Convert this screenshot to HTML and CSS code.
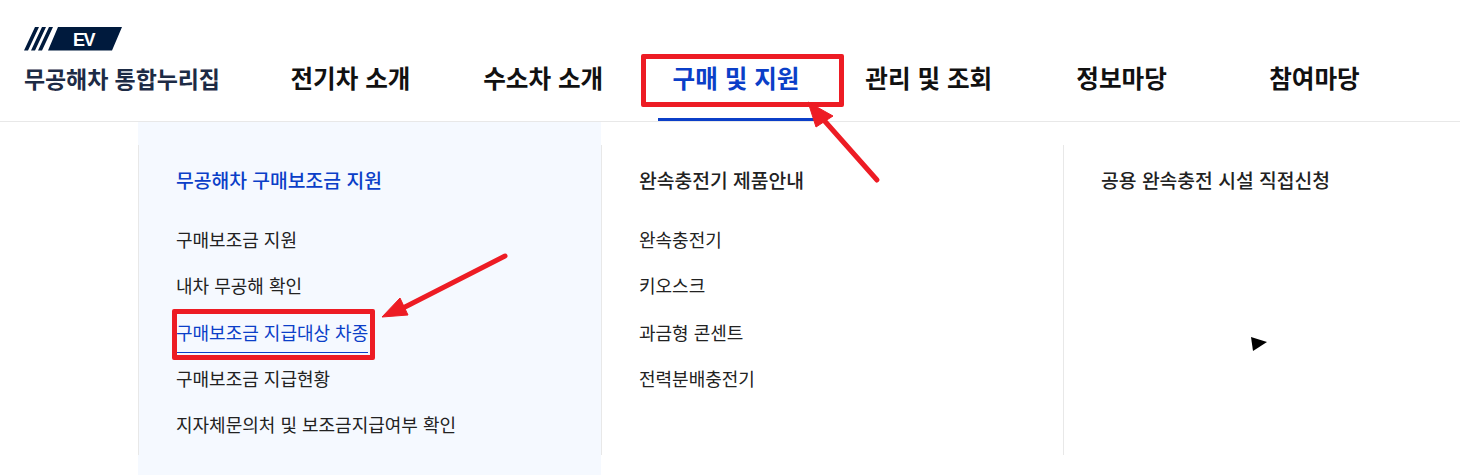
FILE: index.html
```html
<!DOCTYPE html>
<html lang="ko">
<head>
  <meta charset="UTF-8">
  <title>무공해차 통합누리집</title>
  <meta name="viewport" content="width=device-width, initial-scale=1">
  <link rel="stylesheet" href="styles.css">
</head>
<body>
  <header class="top">
    <a class="logo" href="#">
      <svg class="logo-mark" width="98" height="25" viewBox="0 0 98 25">
        <path d="M0 24.500 L11 1 L15 1 L4 24.500Z M7 24.500 L18 1 L22 1 L11 24.500Z M14 24.500 L25 1 L29 1 L18 24.500Z M24 24.500 L34 1 L98 1 L88 24.500Z" fill="#001a3d"/>
        <text x="49" y="20" class="logo-ev">EV</text>
      </svg>
      <span class="logo-name">무공해차 통합누리집</span>
    </a>
    <nav class="gnb">
      <a href="#">전기차 소개</a>
      <a href="#">수소차 소개</a>
      <a href="#" class="on">구매 및 지원</a>
      <a href="#">관리 및 조회</a>
      <a href="#">정보마당</a>
      <a href="#">참여마당</a>
    </nav>
  </header>

  <section class="submenu">
    <div class="col first">
      <h3 class="active">무공해차 구매보조금 지원</h3>
      <ul>
        <li><a href="#">구매보조금 지원</a></li>
        <li><a href="#">내차 무공해 확인</a></li>
        <li><a href="#" class="current">구매보조금 지급대상 차종</a></li>
        <li><a href="#">구매보조금 지급현황</a></li>
        <li><a href="#">지자체문의처 및 보조금지급여부 확인</a></li>
      </ul>
    </div>
    <div class="col">
      <h3>완속충전기 제품안내</h3>
      <ul>
        <li><a href="#">완속충전기</a></li>
        <li><a href="#">키오스크</a></li>
        <li><a href="#">과금형 콘센트</a></li>
        <li><a href="#">전력분배충전기</a></li>
      </ul>
    </div>
    <div class="col">
      <h3>공용 완속충전 시설 직접신청</h3>
    </div>
  </section>

  <!-- annotations drawn over the capture -->
  <div class="mark mark-nav"></div>
  <div class="mark mark-item"></div>
  <svg class="arrows" width="1460" height="475" viewBox="0 0 1460 475">
    <path d="M877 180 L822 118" stroke="#ed1c24" stroke-width="5" stroke-linecap="round"/>
    <path d="M808 102 L833 116 L816 127Z" fill="#ed1c24" stroke="#ed1c24" stroke-width="1"/>
    <path d="M505 256 L405 307" stroke="#ed1c24" stroke-width="5" stroke-linecap="round"/>
    <path d="M382 317 L400 298 L408 315Z" fill="#ed1c24" stroke="#ed1c24" stroke-width="1"/>
    <path d="M1251 337 L1267 342 L1253 351Z" fill="#000"/>
  </svg>
</body>
</html>
```

FILE: styles.css
```css
:root {
  --navy: #1d2b45;
  --blue: #0b3fc8;
  --text: #222;
  --line: #e8e8e8;
}
html, body {
  margin: 0;
  padding: 0;
}
body {
  background: #fff;
  color: var(--text);
  font-family: "Noto Sans CJK KR", "Noto Sans", sans-serif;
  height: 475px;
  overflow: hidden;
  position: relative;
}
a {
  color: inherit;
  text-decoration: none;
}
.top {
  display: flex;
  height: 121px;
  padding-left: 24px;
  border-bottom: 1px solid var(--line);
  box-sizing: content-box;
}
.logo {
  display: flex;
  flex-direction: column;
  width: 230px;
  padding-top: 26px;
  box-sizing: border-box;
}
.logo-mark {
  display: block;
}
.logo-ev {
  fill: #fff;
  font-size: 18px;
  font-weight: 700;
  font-family: "Liberation Sans", sans-serif;
  letter-spacing: -1.5px;
}
.logo-name {
  margin-top: 10px;
  font-size: 23px;
  line-height: 34px;
  font-weight: 700;
  color: var(--navy);
  letter-spacing: -0.1px;
}
.gnb {
  display: grid;
  grid-template-columns: repeat(6, 192.8px);
  height: 100%;
}
.gnb a {
  display: block;
  position: relative;
  text-align: center;
  font-size: 24.6px;
  font-weight: 700;
  color: #111;
  line-height: 34px;
  padding-top: 60px;
}
.gnb a.on {
  color: var(--blue);
}
.gnb a.on::after {
  content: "";
  position: absolute;
  left: 18px;
  right: 18px;
  bottom: 0;
  height: 3px;
  background: var(--blue);
}
.submenu {
  display: grid;
  grid-template-columns: 463px 462px 397px;
  margin-left: 138px;
  height: 353px;
  background: linear-gradient(to right, #f5f9ff 463px, #fff 463px);
  padding-top: 23px;
  box-sizing: border-box;
}
.col {
  height: 310px;
  padding: 20px 0 0 37px;
  box-sizing: border-box;
  border-left: 1px solid var(--line);
}
.col h3 {
  margin: 0 0 29px;
  font-size: 19.3px;
  line-height: 30px;
  font-weight: 500;
  color: #222;
}
.col h3.active {
  color: var(--blue);
}
.col ul {
  list-style: none;
  margin: 0;
  padding: 0;
  display: flex;
  flex-direction: column;
  gap: 16.3px;
}
.col li {
  font-size: 18px;
  line-height: 30px;
}
.col li a.current {
  display: inline-block;
  color: var(--blue);
  border-bottom: 1px solid var(--blue);
  line-height: 40px;
  margin-top: -5px;
  margin-bottom: -6px;
}
.mark {
  position: absolute;
  border: 5px solid #ed1c24;
  border-radius: 2px;
  box-sizing: border-box;
}
.mark-nav {
  left: 641px;
  top: 54px;
  width: 203px;
  height: 53px;
}
.mark-item {
  left: 172px;
  top: 309px;
  width: 203px;
  height: 51px;
}
.arrows {
  position: absolute;
  left: 0;
  top: 0;
  pointer-events: none;
}
```
